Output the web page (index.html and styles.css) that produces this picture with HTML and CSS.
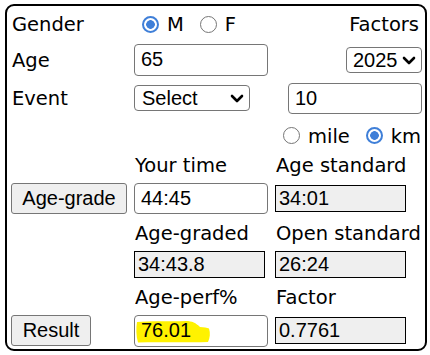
FILE: index.html
```html
<!DOCTYPE html>
<html>
<head>
<meta charset="utf-8">
<link rel="stylesheet" href="styles.css">
</head>
<body>
<form class="box">
  <div class="lbl">Gender</div>
  <div class="radios g">
    <input type="radio" class="rad" name="g" checked><span>M</span>
    <input type="radio" class="rad sp" name="g"><span>F</span>
  </div>
  <div class="lbl right">Factors</div>

  <div class="lbl">Age</div>
  <div><input class="txt h32" type="text" value="65"></div>
  <div class="sel sel-year">
    <select><option>2025</option></select>
    <svg class="chev" width="14" height="9" viewBox="0 0 14 9"><polyline points="2,2 7,7 12,2" fill="none" stroke="#000" stroke-width="2.6" stroke-linecap="round" stroke-linejoin="round"/></svg>
  </div>

  <div class="lbl">Event</div>
  <div class="sel sel-event">
    <select><option>Select</option></select>
    <svg class="chev" width="14" height="9" viewBox="0 0 14 9"><polyline points="2,2 7,7 12,2" fill="none" stroke="#000" stroke-width="2.6" stroke-linecap="round" stroke-linejoin="round"/></svg>
  </div>
  <div class="right"><input class="txt" type="text" value="10"></div>

  <div></div>
  <div></div>
  <div class="radios u">
    <input type="radio" class="rad" name="u"><span>mile</span>
    <input type="radio" class="rad sp" name="u" checked><span>km</span>
  </div>

  <div></div>
  <div class="lbl">Your time</div>
  <div class="lbl">Age standard</div>

  <div><button type="button" class="btn w116">Age-grade</button></div>
  <div><input class="txt" type="text" value="44:45"></div>
  <div><input class="out" type="text" value="34:01" readonly></div>

  <div></div>
  <div class="lbl">Age-graded</div>
  <div class="lbl">Open standard</div>

  <div></div>
  <div><input class="out" type="text" value="34:43.8" readonly></div>
  <div><input class="out" type="text" value="26:24" readonly></div>

  <div></div>
  <div class="lbl">Age-perf%</div>
  <div class="lbl">Factor</div>

  <div><button type="button" class="btn w80">Result</button></div>
  <div class="hl">
    <svg class="mark" width="134" height="32" viewBox="0 0 134 32"><path d="M3 7 C15 5.5 35 6.5 52 6 C58 6 62 8 66 12 C70 12.5 73 12.5 75 13.5 C76.5 18 76 23 74 27 C55 27.5 30 27 4 27.5 C2 21 2 13 3 7 Z" fill="#fff200"/></svg>
    <input class="txt h32 clear" type="text" value="76.01">
  </div>
  <div><input class="out" type="text" value="0.7761" readonly></div>
</form>
</body>
</html>
```
FILE: styles.css
```css
body {
  margin: 0;
  background: #fff;
  color: #000;
  font-family: "DejaVu Sans", Verdana, sans-serif;
  font-size: 19.5px;
}

.box {
  margin: 4px 0 0 5px;
  width: 422px;
  height: 347px;
  box-sizing: border-box;
  border: 2px solid #000;
  border-radius: 9px;
  padding: 0 3px 0 4px;
  display: grid;
  grid-template-columns: 116px 134px 147px;
  grid-template-rows: 35px 37px 40px 34px 26px 41px 28px 35px 30px 37px;
  column-gap: 7px;
  align-items: center;
}

.box > div {
  display: flex;
  align-items: center;
}

.lbl {
  padding-left: 1px;
  padding-top: 2px;
  line-height: 1;
  white-space: nowrap;
}

.right {
  justify-content: flex-end;
}

.lbl.right {
  padding-right: 3px;
}

.radios {
  line-height: 1;
}

.radios.g {
  padding-left: 8px;
  padding-top: 1px;
}

.radios.u {
  padding-left: 8px;
  padding-top: 1px;
}

.radios span {
  margin-left: 8px;
  padding-top: 2px;
}

.rad {
  appearance: none;
  -webkit-appearance: none;
  box-sizing: border-box;
  width: 17px;
  height: 17px;
  margin: 0;
  border: 1px solid #767676;
  border-radius: 50%;
  background: #fff;
  flex: none;
}

.rad:checked {
  border: 2px solid #3f7fd8;
  background: radial-gradient(circle, #3f7fd8 0 4px, #fff 4.6px);
}

.rad.sp {
  margin-left: 16px;
}

.txt {
  box-sizing: border-box;
  width: 134px;
  height: 31px;
  margin: 0;
  padding: 0 0 0 6px;
  border: 1px solid #767676;
  border-radius: 4px;
  background: #fff;
  color: #000;
  font: 20px "Liberation Sans", Arial, sans-serif;
  outline: none;
}

.txt.h32 {
  height: 32px;
}

.out {
  box-sizing: border-box;
  width: 131px;
  height: 27px;
  margin: 0;
  padding: 0 0 0 3px;
  border: 1px solid #000;
  border-radius: 0;
  background: #efefef;
  color: #000;
  font: 20px "Liberation Sans", Arial, sans-serif;
  outline: none;
}

.sel {
  position: relative;
}

.sel select {
  appearance: none;
  -webkit-appearance: none;
  box-sizing: border-box;
  height: 26px;
  margin: 0;
  border: 1px solid #767676;
  border-radius: 4px;
  background: #fff;
  color: #000;
  font: 20px "Liberation Sans", Arial, sans-serif;
  line-height: 24px;
}

.sel-event {
  width: 116px;
  justify-self: start;
}

.sel-event select {
  width: 116px;
  padding: 0 0 0 7px;
}

.sel-year {
  justify-content: flex-end;
}

.sel-year select {
  width: 76px;
  padding: 0 0 0 6px;
}

.chev {
  position: absolute;
  right: 6px;
  top: 50%;
  margin-top: -4px;
  pointer-events: none;
}

.btn {
  box-sizing: border-box;
  height: 31px;
  margin: 0;
  padding: 0;
  border: 1px solid #767676;
  border-radius: 3px;
  background: #efefef;
  color: #000;
  font: 20px "Liberation Sans", Arial, sans-serif;
}

.w116 {
  width: 116px;
}

.w80 {
  width: 80px;
}

.hl {
  position: relative;
  width: 134px;
  height: 32px;
}

.mark {
  position: absolute;
  left: 0;
  top: 0;
}

.txt.clear {
  position: relative;
  background: transparent;
}
```
